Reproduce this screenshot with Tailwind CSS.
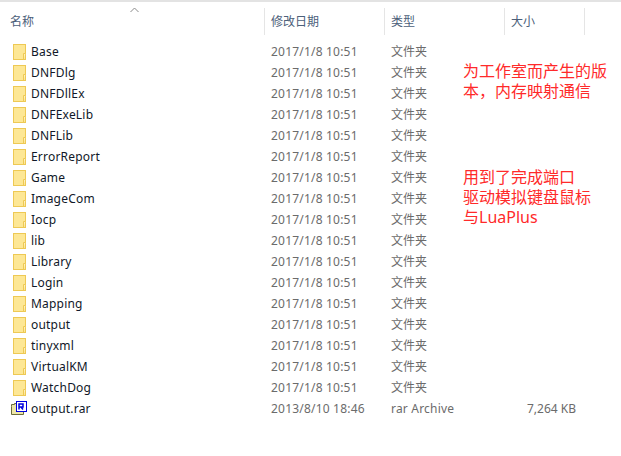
<!DOCTYPE html>
<html lang="zh">
<head>
<meta charset="UTF-8">
<title>output</title>
<script src="https://cdn.jsdelivr.net/npm/@tailwindcss/browser@4"></script>
</head>
<body class="bg-white w-[621px] h-[456px] overflow-hidden font-['Noto_Sans','Noto_Sans_CJK_SC',sans-serif] text-[12px]">
<div class="relative h-[456px]">
  <div class="h-[2px] bg-[#e3e3e3]"></div>
  <!-- Header -->
  <div class="relative grid grid-cols-[265px_120px_120px_80px] h-[33px] pt-[6px] text-[#4c607a]">
    <div class="h-[27px] border-r border-[#e5e5e5] pl-[10px] leading-[28px]">名称</div>
    <div class="h-[27px] border-r border-[#e5e5e5] pl-[6px] leading-[28px]">修改日期</div>
    <div class="h-[27px] border-r border-[#e5e5e5] pl-[6px] leading-[28px]">类型</div>
    <div class="h-[27px] border-r border-[#e5e5e5] pl-[6px] leading-[28px]">大小</div>
    <svg class="absolute left-[130px] top-[5px]" width="9" height="6" viewBox="0 0 9 6" fill="none"><path d="M.5 5 4.500 1l4 4" stroke="#8a8a8a"/></svg>
  </div>
  <!-- Rows -->
  <div class="pt-[6px]">
    <div id="rows"></div>
    <div class="grid grid-cols-[265px_120px_120px_71px] h-[21px] items-center leading-[21px]">
      <div class="flex items-center pl-[11px] text-[#101828] tracking-[0.2px]">
        <svg class="w-[16px] h-[16px] mr-[4px] shrink-0" viewBox="0 0 16 16">
          <path d="M.5 5.500V3.500h3V2.500h9v11H.5z" fill="#ece6a8" stroke="#6b6b3a"/>
          <rect x="5.500" y=".5" width="10" height="10" fill="#fff" stroke="#0000e0"/>
          <path d="M8 8.500V3h4v3H8M10 6l2 2.500" fill="none" stroke="#0000e0" stroke-width="1.500"/>
        </svg>
        output.rar
      </div>
      <div class="pl-[6px] text-[#6b6b6b] tracking-[0.2px]">2013/8/10 18:46</div>
      <div class="pl-[6px] text-[#6b6b6b] tracking-[0.2px]">rar Archive</div>
      <div class="text-right text-[#6b6b6b]">7,264 KB</div>
    </div>
  </div>
  <!-- Annotations -->
  <div class="absolute left-[463px] top-[61px] w-[150px] text-[16px] leading-[20px] text-[#ff2a2a]">为工作室而产生的版<br>本，内存映射通信</div>
  <div class="absolute left-[463px] top-[167px] w-[150px] text-[16px] leading-[20px] text-[#ff2a2a]">用到了完成端口<br>驱动模拟键盘鼠标<br>与LuaPlus</div>
</div>
<script>
  const names = ['Base','DNFDlg','DNFDllEx','DNFExeLib','DNFLib','ErrorReport','Game','ImageCom','Iocp','lib','Library','Login','Mapping','output','tinyxml','VirtualKM','WatchDog'];
  document.getElementById('rows').innerHTML = names.map(n => `
    <div class="grid grid-cols-[265px_120px_120px_71px] h-[21px] items-center leading-[21px]">
      <div class="flex items-center pl-[13px] text-[#101828] tracking-[0.2px]">
        <svg class="w-[13px] h-[16px] mr-[5px] shrink-0" viewBox="0 0 13 16">
          <rect x=".5" y=".5" width="12" height="15" fill="#fde795" stroke="#eec954"/>
          <path d="M10.500 15.500v-6h2" fill="#fff0bd" stroke="#eec954"/>
        </svg>
        ${n}
      </div>
      <div class="pl-[6px] text-[#6b6b6b] tracking-[0.2px]">2017/1/8 10:51</div>
      <div class="pl-[6px] text-[#6b6b6b]">文件夹</div>
      <div></div>
    </div>`).join('');
</script>
</body>
</html>
